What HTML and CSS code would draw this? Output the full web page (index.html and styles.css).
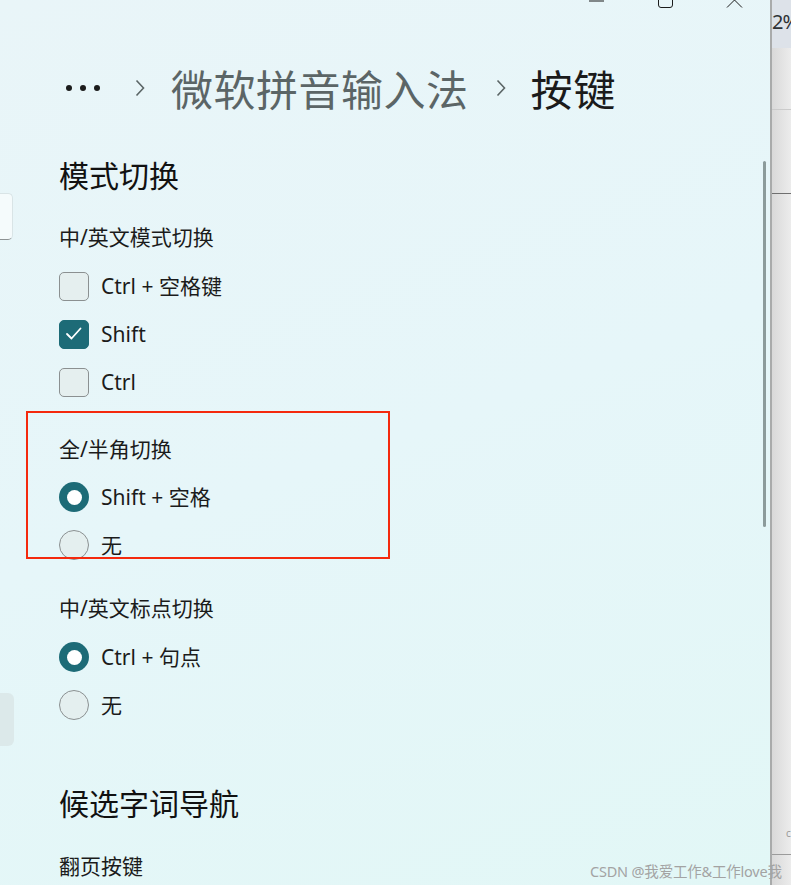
FILE: index.html
```html
<!DOCTYPE html>
<html lang="zh-CN">
<head>
<meta charset="utf-8">
<title>按键</title>
<link rel="stylesheet" href="styles.css">
</head>
<body>
<div class="screen">
  <div class="window">
    <div class="nav-stub">
      <div class="stub-card"></div>
      <div class="stub-sel"></div>
    </div>
    <div class="content">
      <div class="titlebar">
        <span class="caption-btn">
          <svg width="69" height="10" viewBox="0 0 69 10"><line x1="27" y1="1" x2="42" y2="1" stroke="#1b1b1b" stroke-width="1"/></svg>
        </span>
        <span class="caption-btn">
          <svg width="69" height="10" viewBox="0 0 69 10"><rect x="27.5" y="-6.5" width="14" height="14" rx="2.5" fill="none" stroke="#1b1b1b" stroke-width="1"/></svg>
        </span>
        <span class="caption-btn last">
          <svg width="69" height="10" viewBox="0 0 69 10"><path d="M27 -7.5 L42 7.5 M42 -7.5 L27 7.5" stroke="#1b1b1b" stroke-width="1" fill="none"/></svg>
        </span>
      </div>

      <nav class="breadcrumb">
        <span class="crumb-more"><i></i><i></i><i></i></span>
        <svg class="crumb-sep" width="10" height="18" viewBox="0 0 10 18"><polyline points="1.5,1.5 8.5,9 1.5,16.5" fill="none" stroke="#5b6566" stroke-width="1.6"/></svg>
        <span class="crumb-parent">微软拼音输入法</span>
        <svg class="crumb-sep" width="10" height="18" viewBox="0 0 10 18"><polyline points="1.5,1.5 8.5,9 1.5,16.5" fill="none" stroke="#5b6566" stroke-width="1.6"/></svg>
        <span class="crumb-current">按键</span>
      </nav>

      <h2 class="section-title">模式切换</h2>

      <div class="group g1">
        <div class="group-label">中/英文模式切换</div>
        <div class="option"><span class="checkbox"></span><span class="opt-text">Ctrl + 空格键</span></div>
        <div class="option"><span class="checkbox checked"><svg width="29" height="29" viewBox="0 0 29 29"><polyline points="8,15 12.5,19.5 21.5,9.5" fill="none" stroke="#ffffff" stroke-width="1.8" stroke-linecap="round" stroke-linejoin="round"/></svg></span><span class="opt-text">Shift</span></div>
        <div class="option"><span class="checkbox"></span><span class="opt-text">Ctrl</span></div>
      </div>

      <div class="group g2">
        <div class="group-label">全/半角切换</div>
        <div class="option"><span class="radio on"></span><span class="opt-text">Shift + 空格</span></div>
        <div class="option"><span class="radio"></span><span class="opt-text">无</span></div>
      </div>

      <div class="group g3">
        <div class="group-label">中/英文标点切换</div>
        <div class="option"><span class="radio on"></span><span class="opt-text">Ctrl + 句点</span></div>
        <div class="option"><span class="radio"></span><span class="opt-text">无</span></div>
      </div>

      <h2 class="section-title second">候选字词导航</h2>
      <div class="group g4">
        <div class="group-label">翻页按键</div>
      </div>
    </div>
    <div class="scrollbar"></div>
    <div class="highlight"></div>
  </div>

  <div class="side">
    <div class="side-top"><span class="side-pct">2%</span></div>
    <div class="side-block b1"></div>
    <div class="side-block b2"></div>
    <div class="side-block b3"><span class="side-c">c</span></div>
    <div class="side-block b4"></div>
  </div>
</div>
<div class="watermark">CSDN @我爱工作&amp;工作love我</div>
</body>
</html>
```

FILE: styles.css
```css
* { box-sizing: border-box; }

html, body {
  margin: 0;
  padding: 0;
}

body {
  width: 791px;
  height: 885px;
  overflow: hidden;
  font-family: "Segoe UI", "Noto Sans", "Noto Sans CJK SC", sans-serif;
  color: #1b1b1b;
  position: relative;
  background: #e6e6e6;
}

.screen {
  display: flex;
  width: 791px;
  height: 885px;
}

.window {
  position: relative;
  width: 772px;
  height: 885px;
  flex: none;
  display: flex;
  border-right: 2px solid #a9abab;
  background: linear-gradient(160deg, #e9f5f8 0%, #e6f6f9 50%, #e2f7f6 100%);
  overflow: hidden;
}

/* stub of the navigation pane on the left */
.nav-stub {
  width: 14px;
  flex: none;
  display: flex;
  flex-direction: column;
}

.nav-stub > * { flex-shrink: 0; }

.stub-card {
  margin-top: 193px;
  width: 13px;
  height: 47px;
  background: #f5fbfc;
  border: 1px solid #d9e4e6;
  border-left: none;
  border-bottom: 1px solid #8d9293;
  border-radius: 0 5px 5px 0;
}

.stub-sel {
  margin-top: 453px;
  width: 14px;
  height: 53px;
  background: #dce9ea;
  border-radius: 0 6px 6px 0;
}

.content {
  flex: 1;
  padding-left: 45px;
  display: flex;
  flex-direction: column;
}

.content > * { flex-shrink: 0; }

/* caption buttons */
.titlebar {
  height: 10px;
  display: flex;
  justify-content: flex-end;
  overflow: hidden;
}

.caption-btn {
  width: 69px;
  height: 10px;
  display: block;
}

.caption-btn svg { display: block; overflow: hidden; }

.caption-btn.last { margin-right: 1px; }

/* breadcrumb */
.breadcrumb {
  margin-top: 48px;
  height: 60px;
  display: flex;
  align-items: center;
  font-family: "Noto Sans CJK SC", sans-serif;
  font-size: 42px;
  line-height: 60px;
}

.crumb-more {
  margin-left: 7px;
  width: 34px;
  display: flex;
  justify-content: space-between;
  align-items: center;
  margin-right: 1px;
}

.crumb-more i {
  display: block;
  width: 6px;
  height: 6px;
  border-radius: 50%;
  background: #1b1b1b;
}

.crumb-sep {
  display: block;
  margin: 0 26px 0 34px;
  flex: none;
}

.crumb-parent {
  color: #5b6566;
  letter-spacing: 0.5px;
}

.breadcrumb .crumb-parent + .crumb-sep {
  margin-left: 27px;
  margin-right: 25px;
}

.crumb-current {
  color: #1b1b1b;
  letter-spacing: 1px;
}

/* sections */
.section-title {
  margin: 36px 0 0 0;
  height: 40px;
  font-family: "Noto Sans CJK SC", sans-serif;
  font-size: 30px;
  line-height: 40px;
  font-weight: 400;
  color: #111;
}

.section-title.second {
  margin-top: 53px;
}

.group {
  display: flex;
  flex-direction: column;
}

.group > * { flex-shrink: 0; }

.g1 { margin-top: 23px; }
.g2 { margin-top: 23px; }
.g3 { margin-top: 19px; }
.g4 { margin-top: 24px; }

.group-label {
  height: 40px;
  line-height: 40px;
  font-size: 21px;
  margin-bottom: 5px;
  color: #1b1b1b;
}

.g2 .group-label { margin-bottom: 4px; }

.option {
  height: 48px;
  display: flex;
  align-items: center;
  gap: 12px;
  font-size: 21px;
}

.opt-text {
  line-height: 30px;
  color: #1b1b1b;
}

.checkbox {
  width: 30px;
  height: 29px;
  flex: none;
  border: 1.5px solid #8b9091;
  border-radius: 5px;
  background: #e5efef;
  display: block;
}

.checkbox.checked {
  border-color: #1d6b77;
  background: #1d6b77;
}

.checkbox svg {
  display: block;
  margin: -1.5px;
}

.radio {
  width: 30px;
  height: 30px;
  flex: none;
  border-radius: 50%;
  border: 1.5px solid #8b9091;
  background: #e4efef;
  display: flex;
  align-items: center;
  justify-content: center;
}

.radio.on {
  border: none;
  background: #1d6b77;
}

.radio.on::after {
  content: "";
  width: 15px;
  height: 15px;
  border-radius: 50%;
  background: #ffffff;
}

/* overlays */
.scrollbar {
  position: absolute;
  left: 763px;
  top: 161px;
  width: 3px;
  height: 366px;
  border-radius: 2px;
  background: #8c9b9b;
}

.highlight {
  position: absolute;
  left: 26px;
  top: 411px;
  width: 364px;
  height: 148px;
  border: 2.5px solid #f4290d;
}

/* right strip: other window behind */
.side {
  flex: 1;
  display: flex;
  flex-direction: column;
  background: linear-gradient(to right, #d9d9d9, #ececec);
  overflow: hidden;
}

.side > * { flex-shrink: 0; }

.side-top {
  height: 48px;
  background: #dde2e9;
  overflow: hidden;
  white-space: nowrap;
}

.side-pct {
  display: block;
  margin-left: 0;
  margin-top: 8px;
  font-family: "Segoe UI", "Noto Sans", sans-serif;
  font-size: 20px;
  line-height: 28px;
  letter-spacing: -1px;
  color: #2f3236;
}

.side-block.b1 { height: 62px; border-bottom: 1px solid #cbcbcb; }
.side-block.b2 { height: 84px; border-bottom: 1px solid #6f6f6f; }
.side-block.b3 {
  height: 661px;
  border-bottom: 1px solid #9b9b9b;
  position: relative;
}
.side-block.b4 { flex: 1; }

.side-c {
  position: absolute;
  left: 14px;
  bottom: 14px;
  font-size: 10px;
  color: #9a9a9a;
}

.watermark {
  position: absolute;
  left: 590px;
  top: 861px;
  font-family: "Noto Sans", "Noto Sans CJK SC", sans-serif;
  font-size: 14.5px;
  line-height: 20px;
  color: #a3a3a3;
  white-space: nowrap;
  letter-spacing: -0.2px;
}
```
